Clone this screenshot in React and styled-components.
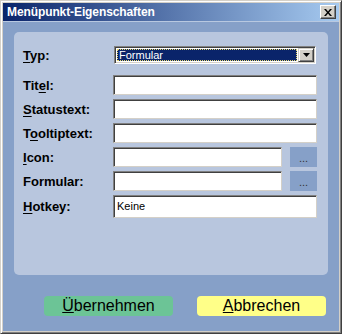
import styled, { createGlobalStyle } from 'styled-components'

const GlobalStyle = createGlobalStyle`
  html, body {
    margin: 0;
    padding: 0;
    background: #ffffff;
  }
  * {
    box-sizing: border-box;
  }
`

const fields = [
  { label: 'Titel', key: 3 },
  { label: 'Statustext', key: 0 },
  { label: 'Tooltiptext', key: 1 },
  { label: 'Icon', key: 0, browse: true },
  { label: 'Formular', key: -1, browse: true },
  { label: 'Hotkey', key: 0, value: 'Keine', tall: true },
]

function AccessLabel({ text, at }) {
  if (at < 0) return <>{text}</>
  return (
    <>
      {text.slice(0, at)}
      <u>{text[at]}</u>
      {text.slice(at + 1)}
    </>
  )
}

export default function App() {
  return (
    <>
      <GlobalStyle />
      <Window>
        <TitleBar>
          <Title>Menüpunkt-Eigenschaften</Title>
          <CloseButton>
            <svg width="8" height="7" viewBox="0 0 8 7">
              <path d="M0 0h2l2 2.5L6 0h2L5 3.5 8 7H6L4 4.5 2 7H0l3-3.5z" fill="#000" />
            </svg>
          </CloseButton>
        </TitleBar>
        <Body>
          <Panel>
            <TypeRow>
              <Label><AccessLabel text="Typ" at={0} />:</Label>
              <Select>
                <SelectValue>
                  <SelectText>Formular</SelectText>
                </SelectValue>
                <DropButton>
                  <svg width="7" height="4" viewBox="0 0 7 4">
                    <path d="M0 0h7L3.5 4z" fill="#000" />
                  </svg>
                </DropButton>
              </Select>
            </TypeRow>
            {fields.map((f) => (
              <Row key={f.label} $tall={f.tall}>
                <Label><AccessLabel text={f.label} at={f.key} />:</Label>
                <FieldWrap>
                  <Input $tall={f.tall}>{f.value}</Input>
                  {f.browse && <BrowseButton>...</BrowseButton>}
                </FieldWrap>
              </Row>
            ))}
          </Panel>
          <Buttons>
            <ActionButton $bg="#6cc496"><u>Ü</u>bernehmen</ActionButton>
            <ActionButton $bg="#ffff88"><u>A</u>bbrechen</ActionButton>
          </Buttons>
        </Body>
      </Window>
    </>
  )
}

const Window = styled.div`
  width: 342px;
  height: 334px;
  display: flex;
  flex-direction: column;
  background: #86a0c8;
  border-top: 1px solid #d4d0c8;
  border-left: 1px solid #d4d0c8;
  border-right: 1px solid #404040;
  border-bottom: 1px solid #404040;
  box-shadow: inset 1px 1px 0 #ffffff, inset -1px -1px 0 #808080, inset 2px 2px 0 #d4d0c8, inset -2px -2px 0 #d4d0c8;
  padding: 2px;
`

const TitleBar = styled.div`
  height: 19px;
  display: flex;
  align-items: center;
  justify-content: space-between;
  padding: 0 3px 0 4px;
  background: linear-gradient(to right, #0a246a, #a6caf0);
  border-bottom: 1px solid #b8c8e0;
`

const Title = styled.div`
  font-family: "Liberation Sans", Arial, sans-serif;
  font-weight: bold;
  font-size: 12px;
  color: #ffffff;
  letter-spacing: -0.1px;
`

const CloseButton = styled.div`
  width: 16px;
  height: 14px;
  display: flex;
  align-items: center;
  justify-content: center;
  background: #d4d0c8;
  border-top: 1px solid #ffffff;
  border-left: 1px solid #ffffff;
  border-right: 1px solid #404040;
  border-bottom: 1px solid #404040;
  box-shadow: inset -1px -1px 0 #808080;
`

const Body = styled.div`
  flex: 1;
  display: flex;
  flex-direction: column;
  padding: 10px 11px 0 11px;
`

const Panel = styled.div`
  height: 243px;
  background: #b8c6de;
  border-radius: 5px;
  padding: 14px 11px 0 9px;
  display: flex;
  flex-direction: column;
`

const Label = styled.div`
  width: 90px;
  flex-shrink: 0;
  font-family: "Liberation Sans", Arial, sans-serif;
  font-weight: bold;
  font-size: 13px;
  color: #000000;
  u {
    text-decoration-thickness: 1px;
    text-underline-offset: 2px;
  }
`

const TypeRow = styled.div`
  display: flex;
  align-items: center;
  height: 18px;
  margin-bottom: 11px;
`

const Select = styled.div`
  width: 202px;
  height: 18px;
  margin-left: 1px;
  display: flex;
  background: #ffffff;
  border-top: 1px solid #808080;
  border-left: 1px solid #808080;
  border-right: 1px solid #ffffff;
  border-bottom: 1px solid #ffffff;
  box-shadow: inset 1px 1px 0 #404040, inset -1px -1px 0 #d4d0c8;
  padding: 1px;
`

const SelectValue = styled.div`
  flex: 1;
  background: #0a246a;
  border: 1px dotted #e8d870;
  margin: 1px 1px 1px 1px;
  display: flex;
  align-items: center;
  padding-left: 1px;
`

const SelectText = styled.span`
  font-family: "Liberation Sans", Arial, sans-serif;
  font-size: 11px;
  color: #ffffff;
`

const DropButton = styled.div`
  width: 16px;
  height: 14px;
  display: flex;
  align-items: center;
  justify-content: center;
  background: #d4d0c8;
  border-top: 1px solid #d4d0c8;
  border-left: 1px solid #d4d0c8;
  border-right: 1px solid #404040;
  border-bottom: 1px solid #404040;
  box-shadow: inset 1px 1px 0 #ffffff, inset -1px -1px 0 #808080;
`

const Row = styled.div`
  display: flex;
  align-items: center;
  height: ${(p) => (p.$tall ? '23px' : '20px')};
  margin-bottom: 4px;
`

const FieldWrap = styled.div`
  flex: 1;
  display: flex;
  gap: 8px;
`

const Input = styled.div`
  flex: 1;
  height: ${(p) => (p.$tall ? '23px' : '20px')};
  background: #ffffff;
  border-top: 1px solid #808080;
  border-left: 1px solid #808080;
  border-right: 1px solid #d4d0c8;
  border-bottom: 1px solid #d4d0c8;
  box-shadow: inset 1px 1px 0 #404040;
  padding: 3px 3px 0 3px;
  font-family: "Liberation Sans", Arial, sans-serif;
  font-size: 11px;
  color: #000;
  line-height: 14px;
`

const BrowseButton = styled.div`
  width: 27px;
  height: 20px;
  background: #86a0c8;
  font-family: "Liberation Sans", Arial, sans-serif;
  font-size: 11px;
  color: #333;
  display: flex;
  align-items: center;
  justify-content: center;
  padding-top: 2px;
`

const Buttons = styled.div`
  display: flex;
  gap: 24px;
  padding: 21px 0 0 30px;
`

const ActionButton = styled.div`
  width: 129px;
  height: 20px;
  border-radius: 4px;
  background: ${(p) => p.$bg};
  display: flex;
  align-items: center;
  justify-content: center;
  font-family: "Liberation Sans", Arial, sans-serif;
  font-size: 16px;
  color: #000;
`
